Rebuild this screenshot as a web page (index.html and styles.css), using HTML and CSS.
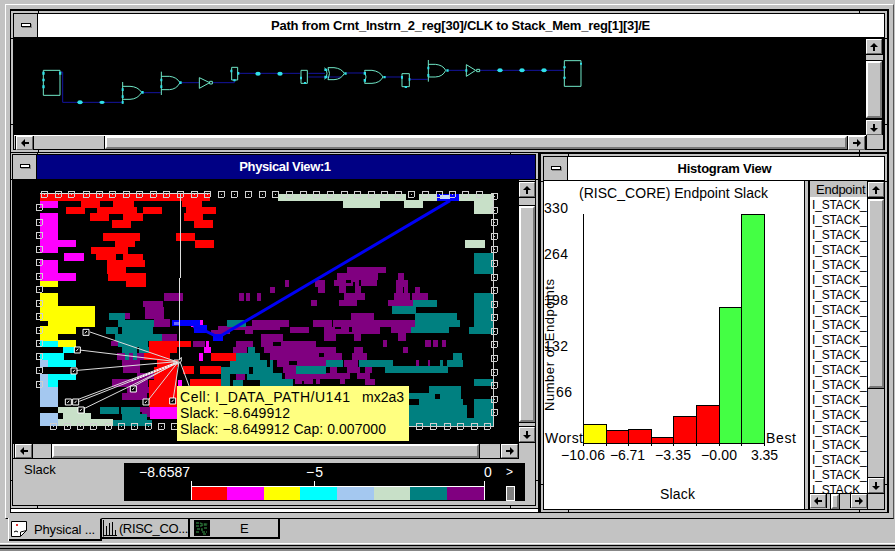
FILE: index.html
```html
<!DOCTYPE html>
<html lang="en">
<head>
<meta charset="utf-8">
<title>Path and Physical View</title>
<link rel="stylesheet" href="styles.css">
</head>
<body>
<svg class="defs" width="0" height="0">
  <symbol id="arrow" viewBox="0 0 8 8"><path d="M0 4L4 0V3H8V5H4V8z"/></symbol>
</svg>
<main class="workspace">
  <div class="desk">
    <section class="win path-win">
      <header class="title"><button class="menu"><i></i></button><h1 class="t-path">Path from Crnt_Instrn_2_reg[30]/CLK to Stack_Mem_reg[1][3]/E</h1></header>
      <div class="path-body">
        <svg class="schematic" viewBox="14 38 852 97" width="852" height="97">
          <g transform="scale(.333333)">
            <path class="net" d="M182 216H188V307H366M428 278H482M543 248H597M638 248H703V238M716 220H900M1023 231H925M925 220H975M1040 219H1092M1155 231H1205M1229 238H1283M1346 211H1395M1440 211H1693"/>
            <path class="gate" d="M130 211H180V286H130zM368 246V311M368 259H390Q414 260 425 277Q414 297 390 298H368M484 215V285M484 229H508Q530 231 540 248Q530 268 508 269H484M598 233V265L629 248zM695 202H713V240H695zM903 211H922V250H903zM974 203Q988 220 974 238M984 203H1002Q1024 205 1033 220Q1024 238 1002 239H984Q993 220 984 203M1094 211H1116Q1140 214 1149 231Q1140 249 1116 250H1094Q1102 231 1094 211M1206 221H1228V260H1206zM1285 180V245M1285 193H1306Q1329 195 1337 211Q1329 230 1306 231H1285M1399 194V229L1427 211zM1693 182H1743V259H1693z"/>
            <g class="pin">
              <ellipse cx="240" cy="307" rx="8" ry="6"/><ellipse cx="306" cy="307" rx="8" ry="5"/><ellipse cx="774" cy="221" rx="8" ry="6"/><ellipse cx="840" cy="221" rx="8" ry="6"/><ellipse cx="1500" cy="211" rx="8" ry="6"/><ellipse cx="1566" cy="211" rx="8" ry="6"/><ellipse cx="1632" cy="211" rx="8" ry="6"/>
              <path d="M127 215h7v9h-7zM127 236h7v8h-7zM127 256h7v9h-7zM177 215h7v9h-7zM424 273h7v8h-7zM365 265h6v8h-6zM365 286h6v8h-6zM365 303h6v8h-6zM538 244h7v8h-7zM481 236h6v8h-6zM481 256h6v8h-6zM691 209h6v8h-6zM712 216h6v8h-6zM700 238h7v6h-7zM900 230h6v8h-6zM912 246h6v6h-6zM973 206h9v7h-9zM973 227h9v8h-9zM1033 217h7v7h-7zM1091 216h7v8h-7zM1091 237h7v8h-7zM1150 228h7v7h-7zM1203 228h6v8h-6zM1226 234h5v8h-5zM1214 258h7v6h-7zM1282 200h6v8h-6zM1282 222h6v8h-6zM1339 208h7v7h-7zM1690 199h7v6h-7zM1690 230h7v6h-7zM1740 188h6v6h-6zM1396 208h6v7h-6z"/>
            </g>
            <path class="gate" d="M629 244h8v8h-8zM1430 208h9v7h-9z"/>
          </g>
        </svg>
        <div class="vs pv"><b><svg class="up"><use href="#arrow"/></svg></b><i class="thumb"></i><b><svg class="down"><use href="#arrow"/></svg></b></div>
        <div class="hs ph"><b><svg><use href="#arrow"/></svg></b><i class="thumb"></i><b><svg class="right"><use href="#arrow"/></svg></b></div>
        <div class="corner"></div>
      </div>
    </section>
    <div class="lower">
      <div class="left-col">
        <section class="win phys-win">
          <header class="title active"><button class="menu"><i></i></button><h1 class="t-phys">Physical View:1</h1></header>
          <div class="phys-body">
            <svg id="map" viewBox="13 180 505 264" width="505" height="264"><g id="cells" transform="translate(0 180) scale(.333333)"></g></svg>
            <div class="vs qv"><b><svg class="up"><use href="#arrow"/></svg></b><i class="thumb"></i><b><svg class="down"><use href="#arrow"/></svg></b></div>
            <div class="hs qh"><b><svg><use href="#arrow"/></svg></b><i class="thumb"></i><b><svg class="right"><use href="#arrow"/></svg></b></div>
            <div class="corner"></div>
            <svg class="tip" viewBox="177 386 232 55" width="232" height="55">
              <text x="180" y="402" textLength="170">Cell: I_DATA_PATH/U141</text><text x="362" y="402" textLength="42">mx2a3</text>
              <text x="180" y="418" textLength="110">Slack: −8.649912</text>
              <text x="180" y="434" textLength="206">Slack: −8.649912 Cap: 0.007000</text>
            </svg>
          </div>
          <footer class="legend">
            <span>Slack</span>
            <svg viewBox="124 463 401 38" width="401" height="38">
              <g shape-rendering="crispEdges">
                <path fill="#f00" d="M192 487h35v13h-35z"/><path fill="#f0f" d="M227 487h37v13h-37z"/><path fill="#ff0" d="M264 487h36v13h-36z"/><path fill="#0ff" d="M300 487h37v13h-37z"/><path fill="#a4c8f0" d="M337 487h37v13h-37z"/><path fill="#c8e0c8" d="M374 487h36v13h-36z"/><path fill="#008080" d="M410 487h37v13h-37z"/><path fill="#800080" d="M447 487h37v13h-37z"/>
                <path fill="#fff" d="M191 486h294v1h-294zM191 481h1v19h-1zM314 481h1v5h-1zM484 481h1v19h-1z"/>
                <path fill="#808080" stroke="#fff" d="M506.500 486.500h8v14h-8z"/>
              </g>
              <text x="139" y="477" textLength="51">−8.6587</text><text x="306" y="477" textLength="17">−5</text><text x="484" y="477">0</text><text class="gt" x="506" y="476">&gt;</text>
            </svg>
          </footer>
        </section>
      </div>
      <section class="win hist-win">
        <header class="title"><button class="menu"><i></i></button><h1 class="t-hist">Histogram View</h1></header>
        <div class="hist-body">
          <svg class="plot" viewBox="544 181 260 328" width="260" height="328">
            <g shape-rendering="crispEdges" stroke="#000">
              <path fill="#ff0" d="M583.500 424.500h23v19h-23z"/>
              <path fill="#f00" d="M606.500 430.500h22v13h-22zM628.500 429.500h23v14h-23zM651.500 437.500h22v6h-22zM673.500 416.500h23v27h-23zM696.500 405.500h23v38h-23z"/>
              <path fill="#4f4" d="M719.500 307.500h22v136h-22zM741.500 214.500h23v229h-23z"/>
              <path d="M583.500 214V446M606.500 443v3M628.500 443v3M651.500 443v3M673.500 443v3M696.500 443v3M719.500 443v3M741.500 443v3M764.500 443v3"/>
            </g>
            <text x="579" y="198" textLength="189">(RISC_CORE) Endpoint Slack</text>
            <g><text x="544" y="213" textLength="24">330</text><text x="544" y="259" textLength="24">264</text><text x="544" y="305" textLength="24">198</text><text x="544" y="351" textLength="24">132</text><text x="556" y="397" textLength="16">66</text></g>
            <text class="axis" transform="translate(554 411) rotate(-90)" textLength="132">Number of Endpoints</text>
            <text x="545" y="443" textLength="38">Worst</text><text x="766" y="443" textLength="30">Best</text>
            <g><text x="561" y="460" textLength="44">−10.06</text><text x="610" y="460" textLength="35">−6.71</text><text x="655" y="460" textLength="36">−3.35</text><text x="701" y="460" textLength="36">−0.00</text><text x="751" y="460" textLength="27">3.35</text></g>
            <text x="660" y="499" textLength="35">Slack</text>
          </svg>
          <div class="sash"></div>
          <div class="list">
            <div class="col-head">Endpoint</div>
            <ul id="rows"></ul>
            <div class="hs lh"><b><svg><use href="#arrow"/></svg></b><i class="thumb"></i><b><svg class="right"><use href="#arrow"/></svg></b></div>
          </div>
          <div class="list-side">
            <div class="vs lv"><b><svg class="up"><use href="#arrow"/></svg></b><i class="thumb"></i><b><svg class="down"><use href="#arrow"/></svg></b></div>
            <div class="corner"></div>
          </div>
        </div>
      </section>
    </div>
  </div>
</main>
<nav class="tabs">
  <button class="tab first"><svg width="17" height="17"><path fill="#fff" stroke="#000" d="M.5.500h15v9l-6 6h-9z"/><path fill="none" stroke="#000" d="M9.500 15v-4l6-1.500M3 11q2-2 4 0"/><path fill="#d33" d="M5 3h2v2H5z"/></svg><span>Physical ...</span></button>
  <button class="tab second"><svg width="17" height="17"><path fill="none" stroke="#000" d="M.5 0V16.500M3.500 6V15M6.500 3V15M9.500 2V15M12.500 10V15M0 15.500H16"/></svg><span>(RISC_CO...</span></button>
  <button class="tab third"><svg width="16" height="16"><path d="M0 0h16v16H0z"/><path fill="none" stroke="#276b34" stroke-width="1.500" d="M2 3h4l2 1h6M2 6h5l2-1h4M3 9h5v3h5M2 12h4M10 8h4M9 14h4" stroke-dasharray="3 1"/></svg><span>E</span></button>
</nav>
<div class="status-edge"></div>
<script src="script.js"></script>
</body>
</html>
```
FILE: styles.css
```css
* { box-sizing: border-box; }
body { margin: 0; width: 895px; height: 551px; overflow: hidden; background: #c3c3c3; color: #000; font: 13px "Liberation Sans", Arial, sans-serif; }
svg { display: block; }
.defs { position: absolute; }
h1, ul { margin: 0; padding: 0; }
button { border: 0; margin: 0; padding: 0; font: inherit; color: #000; background: #c3c3c3; }
text { font: 14px "Liberation Sans", Arial, sans-serif; fill: #000; }

.workspace { margin: 4px 0 0 5px; width: 889px; height: 515px; padding: 4px; border: 1px solid #000; border-top-color: #fff; border-left-color: #fff; border-right-color: #555; }
.desk { height: 504px; padding: 2px 0 0 1px; background: #000; }
.win { position: relative; background: #000; border: 2px solid #c3c3c3; padding: 1px; }
/* resize-handle notches in the window frame */
.win::after {
  content: ""; position: absolute; inset: -2px; pointer-events: none;
  background:
    linear-gradient(#000, #000) left 27px top / 1px 2px,
    linear-gradient(#000, #000) right 27px top / 1px 2px,
    linear-gradient(#000, #000) left 27px bottom / 1px 2px,
    linear-gradient(#000, #000) right 27px bottom / 1px 2px,
    linear-gradient(#000, #000) left top 27px / 2px 1px,
    linear-gradient(#000, #000) right top 27px / 2px 1px,
    linear-gradient(#000, #000) left bottom 27px / 2px 1px,
    linear-gradient(#000, #000) right bottom 27px / 2px 1px;
  background-repeat: no-repeat;
}
.path-win { width: 876px; height: 141px; }
.lower { display: flex; gap: 3px; margin-top: 1px; height: 360px; }
.left-col { width: 527px; background: linear-gradient(#000 0 356px, #fff 356px 359px, #000 359px); }
.phys-win { height: 355px; border-width: 1px 2px 2px 1px; }
.hist-win { width: 346px; height: 358px; margin-top: 1px; }

.title { display: flex; height: 24px; background: #fff; border-bottom: 1px solid #000; }
.title h1 { flex: 1; text-align: center; font-size: 13px; line-height: 23px; padding-right: 1px; white-space: nowrap; }
.title.active { height: 25px; background: #000084; color: #fff; }
.title .t-path { letter-spacing: -.22px; }
.title .t-phys { padding-right: 2px; line-height: 24px; letter-spacing: -.4px; }
.title .t-hist { padding-right: 3px; letter-spacing: -.25px; }
.menu { width: 24px; border-right: 1px solid #000; }
.menu i { display: block; width: 10px; height: 4px; margin: -2px auto 0; background: #fff; border: 1px solid #000; box-shadow: 1px 1px #888; }

.vs, .hs { display: flex; background: #c3c3c3; }
.vs { flex-direction: column; width: 17px; justify-content: space-between; }
.hs { justify-content: space-between; }
.vs b, .hs b { flex: none; display: grid; place-items: center; background: #c3c3c3; border: 1px solid; border-color: #fff #666 #666 #fff; }
.vs b { width: 16px; height: 15px; outline: 1px solid #000; }
.hs b { width: 17px; height: 14px; box-shadow: 1px 0 #000, -1px 0 #000; }
b svg { width: 8px; height: 8px; }
.up { transform: rotate(90deg); }
.down { transform: rotate(-90deg); }
.right { transform: rotate(180deg); }
.thumb { display: block; background: #c3c3c3; border: 2px solid; border-color: #fff #777 #777 #fff; }
.vs .thumb { width: 16px; outline: 1px solid #000; }
.hs .thumb { box-shadow: 1px 0 #000, -1px 0 #000; }
.corner { background: #c3c3c3; border-left: 1px solid #000; }

.path-body { display: grid; grid-template: 97px 14px / 852px 17px; }
.pv { padding-top: 1px; }
.pv .thumb { height: 57px; margin-top: 5px; }
.ph { padding: 0 1px 0 2px; border-top: 1px solid #fff; }
.ph .thumb { width: 742px; margin-left: 71px; }

.phys-body { position: relative; display: grid; grid-template: 264px 15px / 505px 17px; }
.qv { border-left: 1px solid #000; padding: 2px 0; }
.qv .thumb { height: 216px; margin-top: 4px; }
.qh { padding-left: 2px; border-bottom: 1px solid #000; }
.qh .thumb { width: 427px; margin-right: 3px; }
.tip { position: absolute; left: 164px; top: 206px; background: #ffff80; }
.legend { display: flex; height: 46px; padding-top: 4px; background: #c3c3c3; }
.legend span { width: 111px; padding-left: 11px; line-height: 14px; }
.legend svg { background: #000; }
.legend text { fill: #fff; }
.legend .gt { font-size: 12px; }
.plot .axis { font-size: 13px; }

.hist-body { display: grid; grid-template-columns: 260px 6px 57px 17px; height: 328px; }
.plot { background: #fff; }
.sash { background: #c3c3c3; border: 1px solid #000; border-width: 0 2px 0 1px; }
.list { display: flex; flex-direction: column; background: #fff; overflow: hidden; }
.col-head { height: 16px; background: #c3c3c3; padding-left: 6px; line-height: 17px; white-space: nowrap; letter-spacing: -.25px; }
ul { list-style: none; flex: 1; overflow: hidden; }
li { height: 15px; line-height: 17px; padding-left: 2px; white-space: nowrap; font-size: 12px; letter-spacing: -.15px; }
.lh { height: 16px; border-top: 1px solid #000; }
.lh .thumb { width: 8px; margin-right: 7px; }
.lh b { width: 16px; }
.list-side { display: flex; flex-direction: column; border-left: 1px solid #000; }
.lv { height: 312px; padding-top: 1px; width: 16px; }
.lv .thumb { height: 189px; margin-bottom: 88px; }
.list-side .corner { flex: 1; border: 0; border-top: 1px solid #000; }

.tabs { display: flex; height: 25px; margin: -1px 0 0 9px; position: relative; }
.tab { display: flex; align-items: center; border: 1px solid #000; border-width: 1px 2px 2px 0; height: 21px; white-space: nowrap; }
.first { width: 93px; height: 23px; padding: 0 0 0 2px; gap: 6px; border-top-color: #c3c3c3; box-shadow: -1px 0 #fff; letter-spacing: -.15px; }
.second { width: 88px; padding-left: 1px; gap: 2px; letter-spacing: -.35px; }
.third { width: 90px; padding-left: 4px; gap: 30px; }
.status-edge { height: 8px; border-top: 1px solid #fff; background: linear-gradient(#c3c3c3 0 1px, #000 1px 2px, #999 2px 4px, #000 4px 5px, #888 5px); }

.schematic { background: #000; }
.net { fill: none; stroke: #1414a0; stroke-width: 3; }
.gate { fill: none; stroke: #70e8c8; stroke-width: 3; }
.pin { fill: #30e0e8; }
#map { background: #000; }
.pad { fill: none; stroke: #d0d0d0; stroke-width: 3; }
.ray { fill: none; stroke: #ddd; stroke-width: 3; }
.dash { fill: none; stroke: #fff; stroke-width: 5; stroke-dasharray: 5 4; }
.route { fill: none; stroke: #0000f4; stroke-width: 9; }
.mark { fill: #000; stroke: #fff; stroke-width: 3; }
```
FILE: script.js
```js
// Cell rectangles are x1 y1 x2 y2 in thirds of a pixel; each layer carries its own tile offset.
const layers = [
  ['#f00', 0, 0, '119 42 629 63,243 60 300 83,340 62 402 82,545 62 606 82,198 81 256 101,290 81 410 101,429 81 486 101,558 81 648 101,270 100 327 123,370 100 429 123,551 100 608 122,335 121 393 143,582 121 638 143,309 158 420 182,527 158 585 182,345 182 405 202,585 181 642 203,273 202 384 222,289 221 429 241,321 241 435 262,321 262 378 281,324 280 437 302,378 302 437 320'],
  ['#000', 0, 0, '347 222 369 240'],
  ['#f0f', 0, 0, '119 62 174 83,119 99 174 220,174 181 228 202,192 220 252 242,119 240 174 302,174 279 228 302'],
  ['#ff0', 0, 0, '119 304 174 320,119 339 174 423,174 378 285 440'],
  ['#800080', 0, 0, '492 340 549 362,430 362 490 380,435 380 492 418,372 399 389 418,462 418 510 440,718 340 732 362,737 340 749 362,771 340 783 362,811 320 824 340,655 438 760 450,757 420 840 442'],
  ['#ff0', 0, 390, '143 30 285 50,119 48 228 72,119 72 174 93,174 90 228 110'],
  ['#a4c8f0', 0, 390, '119 150 174 172,119 192 174 290,119 308 174 348'],
  ['#0ff', 0, 390, '119 93 174 110,190 110 240 130,119 130 192 150,145 150 228 170,145 192 228 210,145 210 174 232'],
  ['#c8e0c8', 0, 390, '174 290 255 310,188 310 272 330,174 327 340 348'],
  ['#800080', 0, 390, '332 92 360 108,350 130 445 150,366 150 420 168,370 168 420 190,335 208 445 230,380 230 460 248,366 248 440 270,397 290 450 306,425 306 460 320,655 48 840 60,633 60 690 72,782 72 840 110,708 92 760 110,580 92 615 110,700 110 740 128,708 192 735 210,480 72 530 92,410 190 462 208,792 110 840 130,735 60 760 72'],
  ['#008080', 0, 390, '327 9 374 30,354 30 462 50,318 50 354 72,366 50 460 72,345 72 485 92,354 92 445 110,366 110 410 130,418 110 455 130,375 130 388 150,400 130 412 150,300 290 357 312,362 290 420 312,366 312 440 330,340 330 455 348,682 30 738 50,745 110 765 130,708 130 780 150,690 150 800 170,662 170 748 192,760 170 818 192,662 192 690 228,740 192 840 210,700 210 730 228,780 210 880 228'],
  ['#f00', 0, 390, '447 92 572 112,447 112 530 130,432 128 510 150,470 150 535 170,462 170 530 190,462 190 530 210,447 210 530 290,633 128 708 152,548 168 582 192,600 168 662 192,570 207 662 228'],
  ['#f0f', 0, 390, '572 30 610 50,617 92 628 110,611 110 633 130,596 128 610 152,450 290 535 327,535 210 545 230,535 326 570 340'],
  ['#c8e0c8', 810, 0, '24 42 670 63,219 63 330 83,402 62 459 83,612 62 670 101,585 180 645 204'],
  ['#000', 810, 0, '408 42 448 61'],
  ['#800080', 810, 0, '232 261 347 280,200 280 325 300,193 300 320 319,207 319 228 340,255 319 273 345,222 340 285 360,207 360 262 379,136 300 165 320,145 320 165 340,45 300 57 320,0 320 14 340,123 360 141 379,383 280 401 300,377 300 413 338,372 338 420 360,355 360 430 379,435 320 450 340,427 340 475 360,242 400 312 420,129 420 186 440,190 420 438 440,0 420 57 440,60 440 117 460'],
  ['#000', 810, 0, '228 300 242 308,250 305 255 320,268 300 272 318,398 320 402 338'],
  ['#008080', 810, 0, '612 220 670 282,612 340 670 460,430 360 500 380,366 379 438 402,435 400 561 420,435 420 570 440,424 440 537 460,597 440 670 462'],
  ['#800080', 810, 390, '162 50 330 72,162 72 198 92,252 72 273 92,362 50 424 70,385 70 408 92,0 72 38 92,0 92 138 110,0 110 198 130,0 130 215 150,20 150 80 170,80 130 170 168,38 170 90 190,45 190 180 208,75 208 130 222,138 208 150 222,180 170 200 208,252 110 278 130,245 130 290 150,222 150 265 170,232 170 270 190,200 190 240 208,262 190 300 208,210 208 225 222,285 208 315 226,285 172 305 190,338 90 352 110,466 90 482 110,490 90 504 110,515 90 528 110,399 110 413 130,438 150 446 168,474 150 480 168'],
  ['#000', 810, 390, '10 95 32 107,58 152 82 166,148 130 162 142,196 50 212 58,238 50 245 66,96 212 102 222'],
  ['#008080', 810, 390, '78 168 168 192,168 150 219 170,267 150 369 170,345 168 534 190,550 130 576 150,530 150 579 170,511 150 519 168,0 150 10 170,0 190 36 208,0 208 70 228,612 207 670 228,477 228 573 250,414 250 573 268,447 268 580 290,414 284 592 348,612 268 670 330,585 325 670 348'],
  ['#000', 810, 390, '495 252 510 268'],
  ['#00f', 0, 390, '515 30 600 47,582 46 620 70,640 72 670 94'],
  ['#66f', 0, 390, '522 36 536 44'],
  ['#00f', 810, 0, '502 42 567 63'],
  ['#c4d8ff', 810, 0, '510 45 540 57']
];
const cells = document.getElementById('cells');
const add = (cls, d, fill, crisp) => {
  const p = document.createElementNS('http://www.w3.org/2000/svg', 'path');
  p.setAttribute('d', d);
  if (cls) p.setAttribute('class', cls);
  if (fill) p.setAttribute('fill', fill);
  if (crisp) p.setAttribute('shape-rendering', 'crispEdges');
  cells.append(p);
};
const route = () => add('route', 'M580 440L610 450L655 472L1350 62');
for (const [fill, dx, dy, list] of layers) {
  if (fill === '#c4d8ff') route();
  add('', list.split(',').map(r => {
    const [a, b, c, d] = r.split(' ').map(Number);
    return `M${a + dx} ${b + dy}H${c + dx}V${d + dy}H${a + dx}z`;
  }).join(''), fill, true);
}

// I/O pads round the die edge.
const pads = [];
[133,175,214,257,297,337,378,418,460,499,541,582,622,664,703,745,787,826,868,908,949,991,1031,1072,1112,1153,1193,1234,1276,1316,1357,1396,1438].forEach(x => pads.push([x, 41]));
[82,125,164,206,245,287,328,368,409,449,490,529,571,613].forEach(y => pads.push([118, y]));
[47,89,127,169,208,250,292,331,373,412,453,493,535,577,616,658,697].forEach(y => pads.push([1481, y]));
[160,200,240,280,323,364,403,445,484,523,1258,1300,1342,1381,1423,1462].forEach(x => pads.push([x, 739]));
add('ray', 'M119 41H629', null, true);
add('pad', pads.map(([x, y]) => {
  const a = Math.round((x - 9) / 3) * 3 + 1.5, b = Math.round((y - 9) / 3) * 3 + 1.5;
  return `M${a} ${b}h18v18h-18zM${a + 7.5} ${b + 9}h3`;
}).join(''), null, true);
add('pad', 'M1481.500 40V738M1224 739.500H1481', null, true);

// Fan-out of the selected cell.
add('ray', 'M541 42V295L538 296V540', null, true);
add('ray', 'M530 545L270 456M530 545L238 510M530 545L222 572M535 545L232 659M535 548L238 664M535 548L250 687M535 545L400 620M535 545L445 660M537 545L520 655M540 545L568 620');
add('dash', 'M395 602L530 548');
add('mark', [[258,456],[232,509],[222,572],[205,665],[227,665],[243,689],[400,626],[438,665],[518,662]].map(([x, y]) => `M${x - 9} ${y - 8}h18v18h-18zM${x - 3} ${y + 4}l6 -7`).join(''));
add('ray', 'M522 540h16l6 -8v12l-10 8h-12z');

document.getElementById('rows').innerHTML = '<li>I_STACK_</li>'.repeat(20);
```
